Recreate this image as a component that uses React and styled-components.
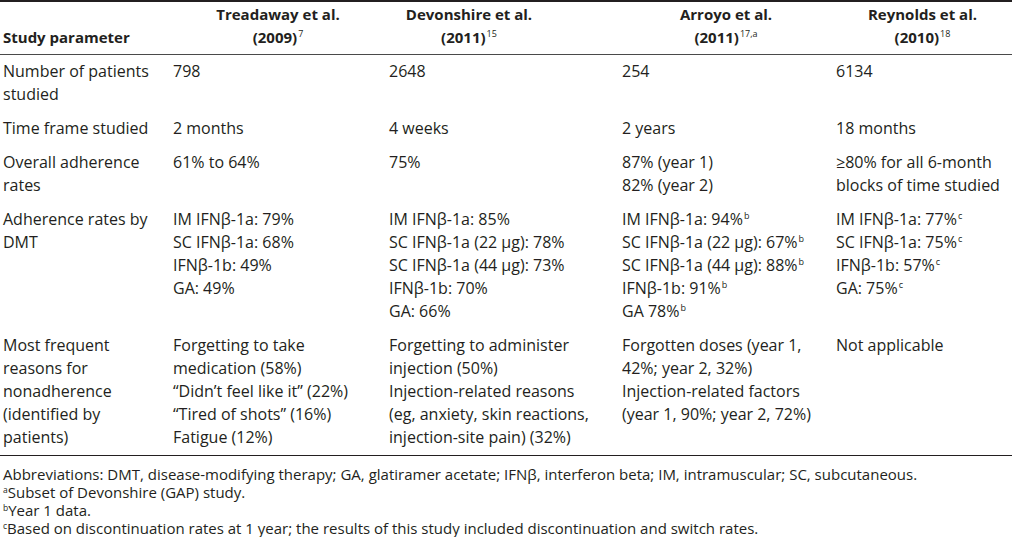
import React from 'react';
import styled, { createGlobalStyle } from 'styled-components';

const GlobalStyle = createGlobalStyle`
  html, body {
    margin: 0;
    padding: 0;
    background: #ffffff;
  }
  body {
    font-family: "Open Sans", "Liberation Sans", sans-serif;
    color: #231f20;
  }
`;

const Page = styled.div`
  width: 1012px;
  font-size: 16px;
  line-height: 23px;
`;

const Table = styled.div`
  border-top: 2px solid #231f20;
  border-bottom: 1.5px solid #231f20;
`;

const Row = styled.div`
  display: grid;
  grid-template-columns: 170px 216px 233px 214px 1fr;
  padding: ${({ $head }) => ($head ? '1px 0 5px' : '5px 0 6px')};
  border-bottom: ${({ $head }) => ($head ? '1px solid #4a4a4a' : 'none')};
`;

const HeadCell = styled.div`
  padding: 0 3px;
  font-size: 15px;
  font-weight: 700;
  text-align: ${({ $left }) => ($left ? 'left' : 'center')};
  align-self: end;
  padding-right: ${({ $shift }) => ($shift ? `${$shift}px` : '3px')};
`;

const Cell = styled.div`
  padding: 0 3px;
  white-space: nowrap;
`;

const Line = styled.div``;

const Sup = styled.sup`
  font-size: 9px;
  font-weight: 400;
  line-height: 0;
  vertical-align: 6px;
  margin-left: 1px;
`;

const Notes = styled.div`
  padding: 9px 3px 0;
  font-size: 15px;
  line-height: 18px;
`;

const NoteMark = styled.sup`
  font-size: 8.5px;
  line-height: 0;
  vertical-align: 5px;
`;

const rows = [
  {
    label: ['Number of patients', 'studied'],
    cells: [['798'], ['2648'], ['254'], ['6134']],
  },
  {
    label: ['Time frame studied'],
    cells: [['2 months'], ['4 weeks'], ['2 years'], ['18 months']],
  },
  {
    label: ['Overall adherence', 'rates'],
    cells: [
      ['61% to 64%'],
      ['75%'],
      ['87% (year 1)', '82% (year 2)'],
      ['≥80% for all 6-month', 'blocks of time studied'],
    ],
  },
  {
    label: ['Adherence rates by', 'DMT'],
    cells: [
      ['IM IFNβ-1a: 79%', 'SC IFNβ-1a: 68%', 'IFNβ-1b: 49%', 'GA: 49%'],
      [
        'IM IFNβ-1a: 85%',
        'SC IFNβ-1a (22 µg): 78%',
        'SC IFNβ-1a (44 µg): 73%',
        'IFNβ-1b: 70%',
        'GA: 66%',
      ],
      [
        ['IM IFNβ-1a: 94%', 'b'],
        ['SC IFNβ-1a (22 µg): 67%', 'b'],
        ['SC IFNβ-1a (44 µg): 88%', 'b'],
        ['IFNβ-1b: 91%', 'b'],
        ['GA 78%', 'b'],
      ],
      [
        ['IM IFNβ-1a: 77%', 'c'],
        ['SC IFNβ-1a: 75%', 'c'],
        ['IFNβ-1b: 57%', 'c'],
        ['GA: 75%', 'c'],
      ],
    ],
  },
  {
    label: ['Most frequent', 'reasons for', 'nonadherence', '(identified by', 'patients)'],
    cells: [
      [
        'Forgetting to take',
        'medication (58%)',
        '“Didn’t feel like it” (22%)',
        '“Tired of shots” (16%)',
        'Fatigue (12%)',
      ],
      [
        'Forgetting to administer',
        'injection (50%)',
        'Injection-related reasons',
        '(eg, anxiety, skin reactions,',
        'injection-site pain) (32%)',
      ],
      [
        'Forgotten doses (year 1,',
        '42%; year 2, 32%)',
        'Injection-related factors',
        '(year 1, 90%; year 2, 72%)',
      ],
      ['Not applicable'],
    ],
  },
];

const renderLine = (line, i) =>
  Array.isArray(line) ? (
    <Line key={i}>
      {line[0]}
      <Sup>{line[1]}</Sup>
    </Line>
  ) : (
    <Line key={i}>{line}</Line>
  );

const App = () => (
  <Page>
    <GlobalStyle />
    <Table>
      <Row $head>
        <HeadCell $left>Study parameter</HeadCell>
        <HeadCell>
          Treadaway et al.
          <br />
          (2009)<Sup>7</Sup>
        </HeadCell>
        <HeadCell $shift={70}>
          Devonshire et al.
          <br />
          (2011)<Sup>15</Sup>
        </HeadCell>
        <HeadCell>
          Arroyo et al.
          <br />
          (2011)<Sup>17,a</Sup>
        </HeadCell>
        <HeadCell>
          Reynolds et al.
          <br />
          (2010)<Sup>18</Sup>
        </HeadCell>
      </Row>
      {rows.map((row, r) => (
        <Row key={r}>
          <Cell>{row.label.map(renderLine)}</Cell>
          {row.cells.map((lines, c) => (
            <Cell key={c}>{lines.map(renderLine)}</Cell>
          ))}
        </Row>
      ))}
    </Table>
    <Notes>
      <div>
        Abbreviations: DMT, disease-modifying therapy; GA, glatiramer acetate; IFNβ, interferon beta;
        IM, intramuscular; SC, subcutaneous.
      </div>
      <div>
        <NoteMark>a</NoteMark>Subset of Devonshire (GAP) study.
      </div>
      <div>
        <NoteMark>b</NoteMark>Year 1 data.
      </div>
      <div>
        <NoteMark>c</NoteMark>Based on discontinuation rates at 1 year; the results of this study
        included discontinuation and switch rates.
      </div>
    </Notes>
  </Page>
);

export default App;
